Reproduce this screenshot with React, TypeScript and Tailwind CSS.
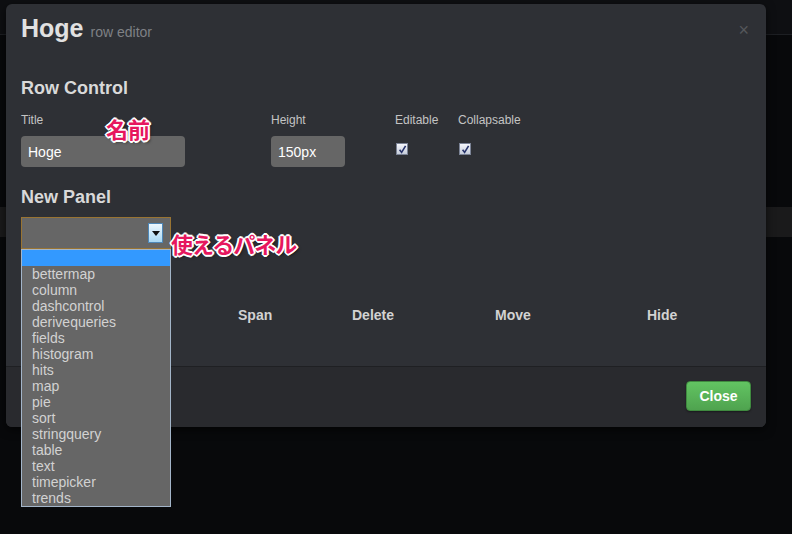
const panels = [
  'bettermap',
  'column',
  'dashcontrol',
  'derivequeries',
  'fields',
  'histogram',
  'hits',
  'map',
  'pie',
  'sort',
  'stringquery',
  'table',
  'text',
  'timepicker',
  'trends',
];

const note =
  "font-['Noto_Sans_CJK_JP',sans-serif] font-bold text-[#e6175e] leading-none [text-shadow:2px_0_0_#fff,-2px_0_0_#fff,0_2px_0_#fff,0_-2px_0_#fff,1px_1px_0_#fff,-1px_-1px_0_#fff,1px_-1px_0_#fff,-1px_1px_0_#fff,2px_2px_3px_rgba(0,0,0,0.55)]";

function Check() {
  return (
    <span className="ml-[1px] flex h-[12px] w-[12px] items-center justify-center border border-[#7b8396] bg-linear-to-b from-[#f5f6fb] to-[#c6cddb]">
      <svg width="9" height="9" viewBox="0 0 9 9">
        <path d="M1.6 4.8 L3.6 7.4 L7.6 0.8" fill="none" stroke="#27336a" strokeWidth="1.6" />
      </svg>
    </span>
  );
}

function SelectBox() {
  return (
    <div className="relative mt-[9px] w-[150px]">
      <div className="flex h-[32px] items-center justify-end border border-[#997433] bg-[#666666] pr-[7px]">
        <span className="flex h-[20px] w-[15px] items-center justify-center border border-[#4f88b8] bg-linear-to-b from-[#eef8fe] to-[#a9d8f3]">
          <svg width="8" height="5" viewBox="0 0 8 5">
            <path d="M0 0 H8 L4 5 Z" fill="#111" />
          </svg>
        </span>
      </div>
      <div className="absolute left-0 top-full z-10 w-[150px] border border-[#a3b5c9] bg-[#666666]">
        <div className="h-[16px] bg-[#3399ff]" />
        {panels.map((p) => (
          <div key={p} className="h-[16px] pl-[10px] text-[14px] leading-[16px] text-[#d2d2d2]">
            {p}
          </div>
        ))}
      </div>
      <span className={`absolute left-[150px] top-[15px] z-20 whitespace-nowrap text-[22px] tracking-[-1px] ${note}`}>
        使えるパネル
      </span>
    </div>
  );
}

export default function App() {
  return (
    <div className="relative h-[534px] w-[792px] overflow-hidden bg-[#08090b] font-['Liberation_Sans',Arial,sans-serif]">
      <div className="h-[35px] border-b border-[#1d1f23] bg-[#0e0f12]" />
      <div className="mt-[172px] h-[30px] bg-[#1a1a1b]" />

      <div className="absolute left-[6px] top-[4px] flex h-[423px] w-[760px] flex-col rounded-[6px] bg-[#2e3035] shadow-[0_3px_10px_rgba(0,0,0,0.6)]">
        <div className="h-[362px]">
          <div className="flex items-start justify-between px-[15px] pt-[9px]">
            <div className="flex items-baseline gap-[7px]">
              <span className="text-[25px] font-bold leading-[30px] text-[#e1e1e1]">Hoge</span>
              <span className="text-[14px] text-[#7f8185]">row editor</span>
            </div>
            <span className="mt-[8px] pr-[2px] text-[18px] leading-[18px] text-[#55575b]">×</span>
          </div>

          <div className="px-[15px]">
            <h3 className="mt-[34px] text-[18px] font-bold leading-[22px] text-[#d9d9d9]">Row Control</h3>
            <div className="mt-[14px] flex text-[12px] leading-[14px] text-[#c4c4c4]">
              <div className="relative w-[250px]">
                <div>Title</div>
                <div className="mt-[9px] flex h-[31px] w-[164px] items-center rounded-[4px] bg-[#666666] px-[7px] text-[14px] text-white">
                  Hoge
                </div>
                <span className={`absolute left-[85px] top-[4px] text-[22px] ${note}`}>名前</span>
              </div>
              <div className="w-[124px]">
                <div>Height</div>
                <div className="mt-[9px] flex h-[31px] w-[74px] items-center rounded-[4px] bg-[#666666] px-[7px] text-[14px] text-white">
                  150px
                </div>
              </div>
              <div className="w-[63px]">
                <div>Editable</div>
                <div className="mt-[16px]">
                  <Check />
                </div>
              </div>
              <div>
                <div>Collapsable</div>
                <div className="mt-[16px]">
                  <Check />
                </div>
              </div>
            </div>

            <h3 className="mt-[19px] text-[18px] font-bold leading-[22px] text-[#d9d9d9]">New Panel</h3>
            <SelectBox />

            <div className="mt-[56px] grid grid-cols-[217px_114px_143px_152px_1fr] text-[14px] font-bold leading-[20px] text-[#d2d2d2]">
              <span />
              <span>Span</span>
              <span>Delete</span>
              <span>Move</span>
              <span>Hide</span>
            </div>
          </div>
        </div>

        <div className="flex flex-1 justify-end rounded-b-[6px] border-t border-[#1f2023] bg-[#292a2e] px-[15px] pt-[14px]">
          <button className="h-[30px] w-[65px] rounded-[4px] border border-[#3f8a3f] bg-linear-to-b from-[#62c462] to-[#4fa34f] text-[14px] font-bold text-white shadow-[0_1px_2px_rgba(0,0,0,0.4)]">
            Close
          </button>
        </div>
      </div>
    </div>
  );
}
